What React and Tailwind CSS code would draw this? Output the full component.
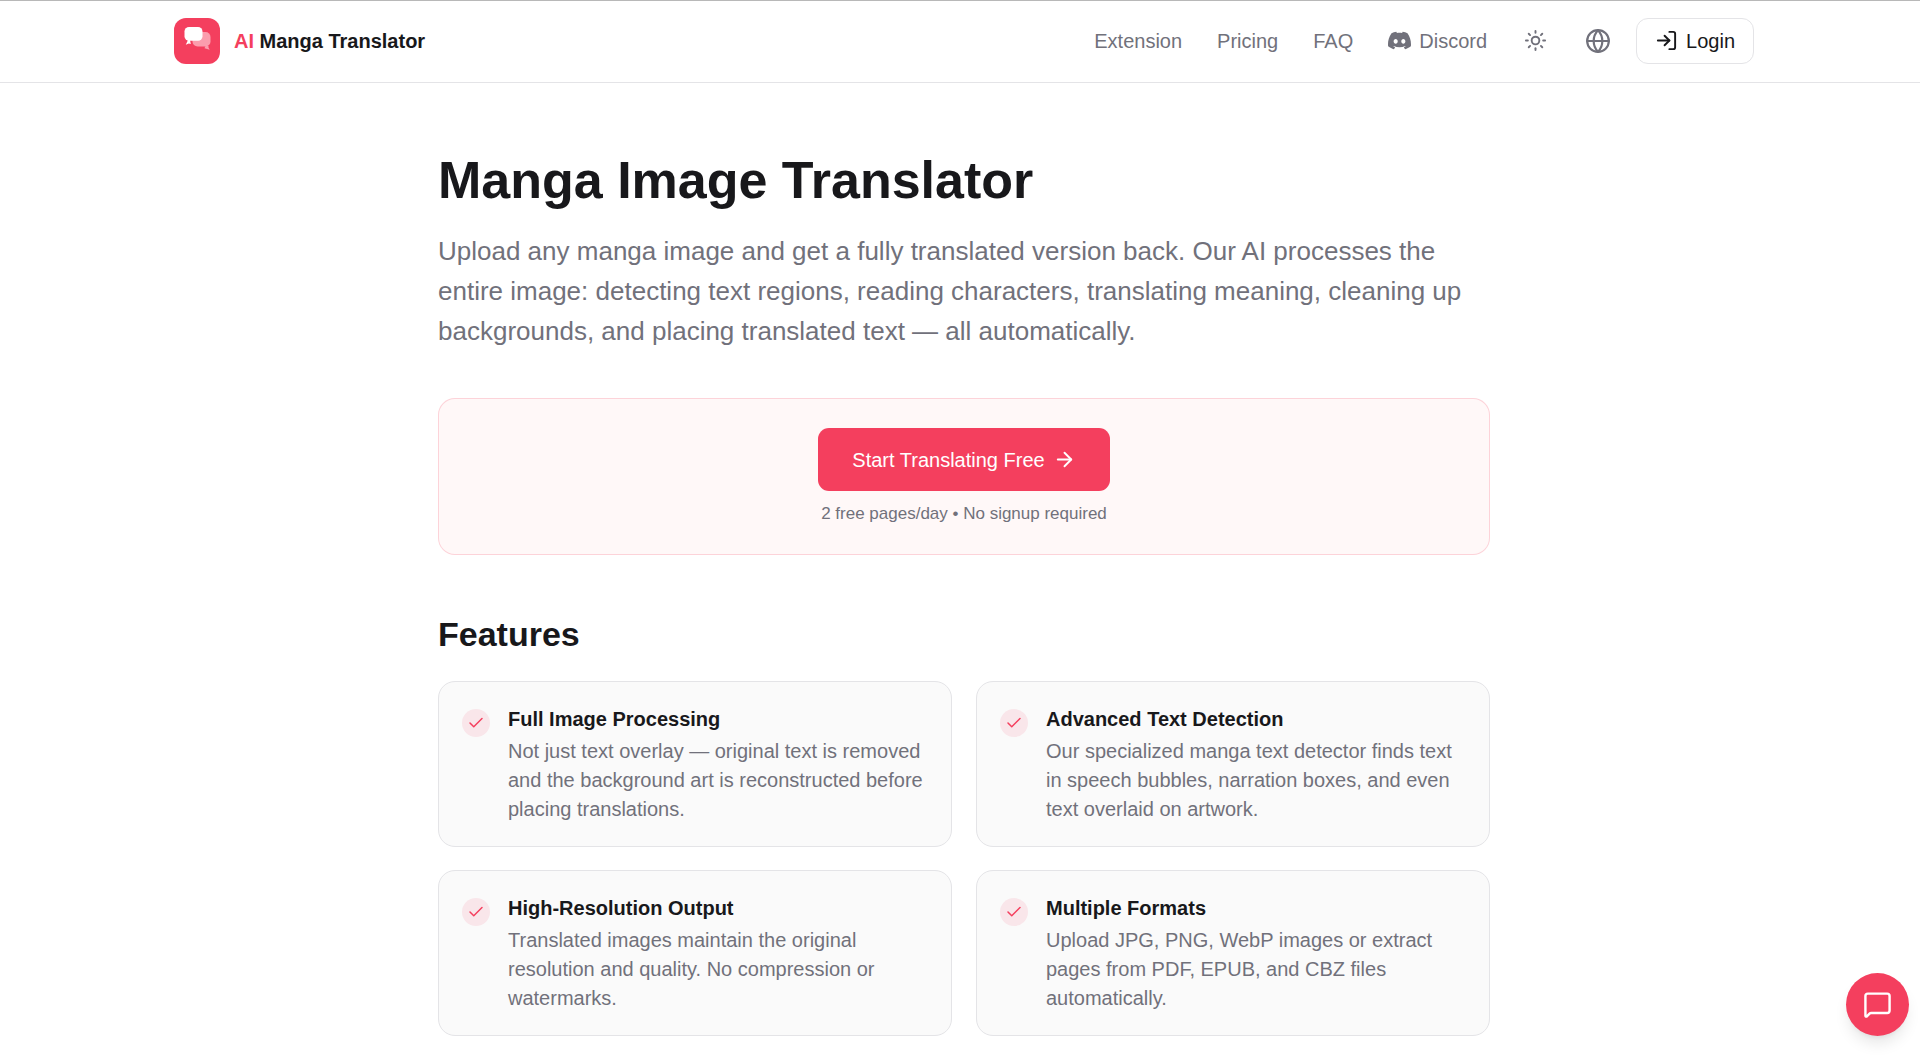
import React from 'react';
import {ArrowRight, Check, Globe, LogIn, MessageSquare, Sun} from 'lucide-react';
import {SiDiscord} from 'react-icons/si';

const NAV_LINKS = ['Extension', 'Pricing', 'FAQ'];

const FEATURES = [
    {
        title: 'Full Image Processing',
        text: 'Not just text overlay — original text is removed and the background art is reconstructed before placing translations.',
    },
    {
        title: 'Advanced Text Detection',
        text: 'Our specialized manga text detector finds text in speech bubbles, narration boxes, and even text overlaid on artwork.',
    },
    {
        title: 'High-Resolution Output',
        text: 'Translated images maintain the original resolution and quality. No compression or watermarks.',
    },
    {
        title: 'Multiple Formats',
        text: 'Upload JPG, PNG, WebP images or extract pages from PDF, EPUB, and CBZ files automatically.',
    },
];

const Logo = () => (
    <svg viewBox="0 0 46 46" className="size-[46px]" aria-hidden="true">
        <rect width="46" height="46" rx="12" fill="#f43f5e"/>
        {/* back bubble, tail to the right */}
        <g fill="#fb9dad">
            <rect x="18.500" y="14" width="18" height="14.500" rx="5"/>
            <path d="M31.500 28h3v1.500l1.200 2.300-5.200-1.600z"/>
        </g>
        {/* front bubble, tail to the left */}
        <g fill="#fff">
            <rect x="10.500" y="9" width="18" height="13.700" rx="4.500"/>
            <path d="M14 22h2l.8 4-2-.6-3 1.300z"/>
        </g>
    </svg>
);

const Header = () => (
    <header className="border-t border-b border-t-[#b8b8b8] border-b-zinc-200 bg-white pl-2">
        <div className="mx-auto flex h-[81px] max-w-[1580px] items-center justify-between pb-0.5">
            <a href="#" className="flex items-center gap-[14px] text-xl font-bold text-zinc-900">
                <Logo/>
                <span><span className="text-[#f43f5e]">AI</span> Manga Translator</span>
            </a>
            <nav className="flex items-center text-xl text-zinc-500">
                <div className="mr-6 flex items-center gap-[35px]">
                    {NAV_LINKS.map((label) => <a key={label} href="#" className="hover:text-zinc-900">{label}</a>)}
                    <a href="#" className="flex items-center gap-2 hover:text-zinc-900">
                        <SiDiscord className="size-[23px]"/>
                        Discord
                    </a>
                </div>
                <button type="button" aria-label="Toggle theme" className="flex size-12 items-center justify-center">
                    <Sun className="size-[23px]"/>
                </button>
                <button type="button" aria-label="Change language" className="mr-[14px] ml-[15px] flex size-12 items-center justify-center">
                    <Globe className="size-[26px]"/>
                </button>
                <button type="button" className="flex h-[46px] items-center gap-2 rounded-xl border border-zinc-200 px-[18px] text-zinc-900">
                    <LogIn className="size-[23px]"/>
                    Login
                </button>
            </nav>
        </div>
    </header>
);

const FeatureCard = ({title, text}) => (
    <li className="flex gap-[18px] rounded-[17px] border border-zinc-200 bg-[#fafafa] px-[23px] pt-[23px] pb-[22px]">
        <span className="mt-1 flex size-7 shrink-0 items-center justify-center rounded-full bg-[#f43f5e]/10">
            <Check className="size-[18px] text-[#f43f5e]"/>
        </span>
        <div>
            <h3 className="text-xl leading-7 font-bold text-zinc-900">{title}</h3>
            <p className="mt-1 text-xl leading-[29px] text-zinc-500">{text}</p>
        </div>
    </li>
);

const App = () => (
    <div className="min-h-screen bg-white font-['Liberation_Sans',Arial,sans-serif]">
        <Header/>
        <main className="pb-6 pl-2">
            <div className="mx-auto max-w-[1052px] pt-[69px]">
                <h1 className="text-[52px] leading-[57px] font-bold text-zinc-900">Manga Image Translator</h1>
                <p className="mt-[22px] text-[26px] leading-10 text-zinc-500">
                    Upload any manga image and get a fully translated version back. Our AI processes the entire image: detecting text regions, reading characters, translating meaning, cleaning up backgrounds, and placing translated text — all automatically.
                </p>

                <section className="mt-[47px] flex flex-col items-center rounded-[17px] border border-[#f43f5e]/20 bg-[#fff8f8] px-7 pt-[29px] pb-7">
                    <a href="#" className="flex h-[63px] items-center gap-2 rounded-[11px] bg-[#f43f5e] px-[34px] text-xl text-white hover:bg-[#e11d48]">
                        Start Translating Free
                        <ArrowRight className="size-[23px]"/>
                    </a>
                    <p className="mt-[11px] text-[17px] leading-6 text-zinc-500">2 free pages/day • No signup required</p>
                </section>

                <section className="mt-[58px]">
                    <h2 className="text-[34px] leading-[43px] font-bold text-zinc-900">Features</h2>
                    <ul className="mt-[25px] grid grid-cols-1 gap-x-6 gap-y-[23px] md:grid-cols-2">
                        {FEATURES.map((feature) => <FeatureCard key={feature.title} {...feature}/>)}
                    </ul>
                </section>
            </div>
        </main>
        <button type="button" aria-label="Open chat" className="fixed right-[11px] bottom-6 flex size-[63px] items-center justify-center rounded-full bg-[#f43f5e] text-white shadow-lg">
            <MessageSquare className="size-[29px]"/>
        </button>
    </div>
);

export default App;
